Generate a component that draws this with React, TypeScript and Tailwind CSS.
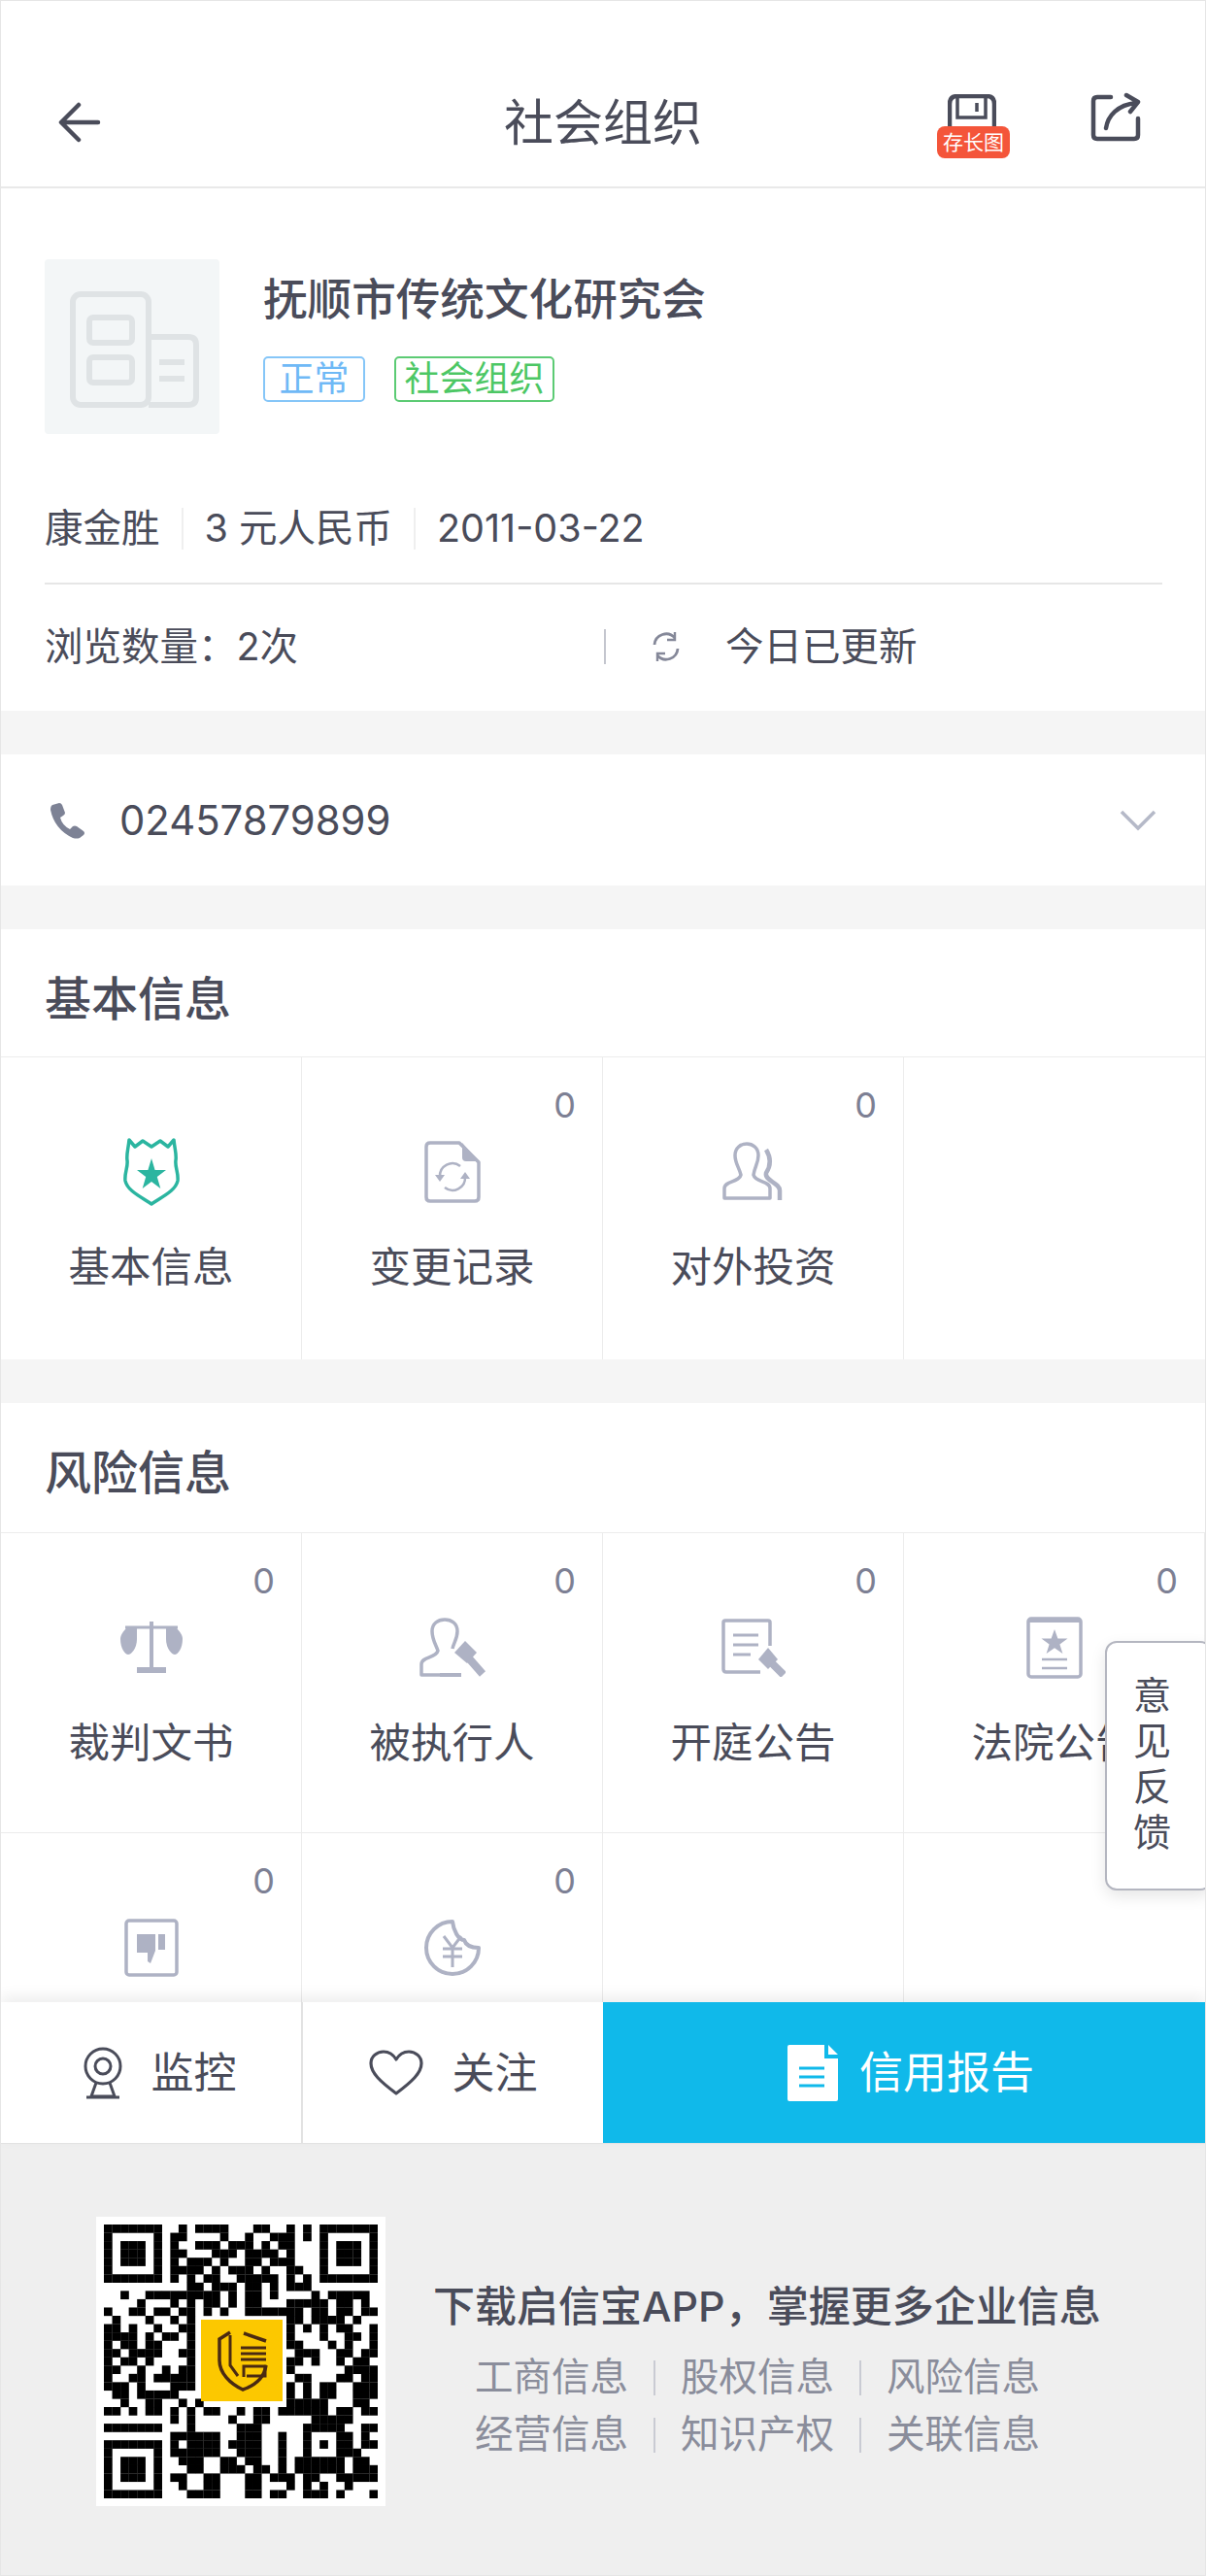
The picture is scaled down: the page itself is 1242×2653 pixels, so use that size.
import React from "react";

const F0 = "11111110";
const F1 = "10000010";
const F2 = "10111010";
const R0 = "01111111";
const R1 = "01000001";
const R2 = "01011101";
const Z = "0000000000";
const N = "00000000";

const QR = [
  F0 + "01011110001100101" + R0,
  F1 + "11000010010011101" + R1,
  F2 + "10011101110101100" + R2,
  F2 + "11000111011110100" + R2,
  F2 + "10111010011011100" + R2,
  F1 + "11110101110100110" + R1,
  F0 + "10101100111110101" + R0,
  N + "00110111011010111" + N,
  "00100111" + "11111101011010000" + "10111110",
  "00001000" + "10101101011000111" + "11011010",
  "10011011" + "01101010011111110" + "11011011",
  "01000100" + "1010" + Z + "110" + "11110100",
  "11010010" + "0110" + Z + "101" + "01011001",
  "11110101" + "1010" + Z + "100" + "01001101",
  "10110110" + "0010" + Z + "110" + "00101001",
  "11011110" + "0110" + Z + "011" + "10011011",
  "10110100" + "0010" + Z + "110" + "10010110",
  "11001001" + "0110" + Z + "100" + "00001111",
  "10011011" + "1110" + Z + "011" + "00011011",
  "11101000" + "1110" + Z + "101" + "01100111",
  "01101111" + "1000" + Z + "101" + "01100111",
  "00100110" + "0101" + Z + "111" + "11000110",
  "11010110" + "10101100101101111" + "11011011",
  N + "10100001001100000" + "11111000",
  "11111110" + "00100000111000001" + "11110011",
  N + "11111100111001001" + "00011010",
  F0 + "10111101111001001" + "01011011",
  F1 + "11111100111001001" + "00011100",
  F2 + "01110011011001011" + "11110110",
  F2 + "00110011101101011" + "11110111",
  F2 + "11001100011011101" + "10011111",
  F1 + "01001100011000101" + "01001000",
  F0 + "00111100011011001" + "11010001",
];

const dark = "#4a4c5a";
const ic = "#aeb2c4";

function QRCode() {
  return (
    <div className="relative w-[298px] h-[298px] bg-white flex items-center justify-center shrink-0">
      <svg width="282" height="282" viewBox="0 0 33 33" className="block">
        {QR.map((row, y) =>
          row.split("").map((c, x) => (c === "1" ? <rect key={x + "-" + y} x={x} y={y} width="1.02" height="1.02" fill="#000" /> : null))
        )}
      </svg>
      <svg width="84" height="84" viewBox="0 0 84 84" className="absolute left-[108px] top-[106px]">
        <rect x="0" y="0" width="84" height="84" fill="#fcc800" />
        <g fill="none" stroke="#4a2a12" strokeWidth="3">
          <path d="M30 13 L19 20 V42 C19 55 30 66 43 72 C55 68 65 60 67 47" strokeWidth="3.5" />
          <path d="M30 16 V47 L38 58" />
          <path d="M44 14 L67 22" strokeWidth="3.5" />
          <path d="M41 29 H67 M41 35 H67 M41 41 H67" />
          <path d="M44 59 V48 H66 V58 H47" />
        </g>
      </svg>
    </div>
  );
}

const Shield = () => (
  <svg width="60" height="70" viewBox="0 0 60 70">
    <path d="M7 2 L13 9 L21 3 L30 9 L39 3 L47 9 L53 2 C54 12 56 17 55 23 C54 30 58 36 57 44 C55 54 42 60 30 68 C18 60 5 54 3 44 C2 36 6 30 5 23 C4 17 6 12 7 2 Z" fill="none" stroke="#2bb5a0" strokeWidth="3.5" strokeLinejoin="round" />
    <path d="M30 21 L33.6 33 H45 L35.8 40 L39.3 52 L30 45 L20.7 52 L24.2 40 L15 33 H26.4 Z" fill="#2bb5a0" />
  </svg>
);
const DocRefresh = () => (
  <svg width="60" height="66" viewBox="0 0 60 66" fill="none" stroke={ic} strokeWidth="3.5">
    <path d="M37 3 H7 Q3 3 3 7 V59 Q3 63 7 63 H53 Q57 63 57 59 V23 Z" strokeLinejoin="round" />
    <path d="M40 3 L57 22 H44 Q40 22 40 18 Z" fill={ic} stroke="none" />
    <path d="M17 38 A13 13 0 0 1 38 27" strokeWidth="2.5" />
    <path d="M43 38 A13 13 0 0 1 22 49" strokeWidth="2.5" />
    <path d="M12 36 L22 36 L17 43 Z M38 40 L48 40 L43 33 Z" fill={ic} stroke="none" />
  </svg>
);
const People = () => (
  <svg width="66" height="62" viewBox="0 0 66 62" fill="none" stroke={ic} strokeWidth="3.5">
    <path d="M3 58 V48 C3 40 18 42 20 34 C18 26 14 22 14 14 C14 6 20 2 26 2 C32 2 38 6 38 14 C38 22 34 26 33 34 C35 42 50 40 50 48 V58 Z" strokeLinejoin="round" />
    <path d="M46 8 C52 18 50 26 46 32 C44 40 60 42 60 50 V60" strokeWidth="4.5" />
  </svg>
);
const Scale = () => (
  <svg width="66" height="54" viewBox="0 0 66 54">
    <path d="M33 0 V48" stroke={ic} strokeWidth="4" />
    <path d="M18 50 H48" stroke={ic} strokeWidth="6" />
    <path d="M6 6 H60" stroke={ic} strokeWidth="3" />
    <path d="M1 18 C1 14 4 10 7 7 L18 7 V18 C18 28 12 34 9 34 C6 34 1 28 1 18 Z" fill={ic} />
    <path d="M48 7 L59 7 C62 10 65 14 65 18 C65 28 60 34 57 34 C54 34 48 28 48 18 Z" fill={ic} />
  </svg>
);
const PersonGavel = () => (
  <svg width="70" height="62" viewBox="0 0 70 62" fill="none" stroke={ic} strokeWidth="3.5">
    <path d="M36 59 H3 V48 C3 40 18 42 20 34 C17 26 14 22 14 14 C14 6 20 2 27 2 C34 2 40 6 40 14 C40 22 36 26 35 32" strokeLinejoin="round" />
    <path d="M48 24 L60 36 L50 47 L37 36 Z" fill={ic} stroke="none" />
    <path d="M52 42 L66 58" strokeWidth="8" />
    <path d="M22 59 H44" strokeWidth="4" />
  </svg>
);
const DocGavel = () => (
  <svg width="66" height="60" viewBox="0 0 66 60" fill="none" stroke={ic} strokeWidth="3.5">
    <path d="M50 28 V4 Q50 2 48 2 H4 Q2 2 2 4 V52 Q2 55 5 55 H40" />
    <path d="M12 17 H38 M12 27 H38 M12 37 H30" strokeWidth="3" />
    <path d="M48 30 L58 42 L48 52 L38 42 Z" fill={ic} stroke="none" />
    <path d="M52 46 L64 58" strokeWidth="8" />
  </svg>
);
const Cert = () => (
  <svg width="58" height="64" viewBox="0 0 58 64" fill="none" stroke={ic} strokeWidth="3.5">
    <rect x="2" y="2" width="54" height="60" rx="3" />
    <path d="M2 4 H56" strokeWidth="4" />
    <path d="M29 13 L32.4 22.5 H42.5 L34.4 28.5 L37.4 38 L29 32.2 L20.6 38 L23.6 28.5 L15.5 22.5 H25.6 Z" fill={ic} stroke="none" />
    <path d="M16 44 H42 M16 53 H42" strokeWidth="2.5" />
  </svg>
);
const ThumbDown = () => (
  <svg width="56" height="60" viewBox="0 0 56 60" fill="none" stroke={ic} strokeWidth="3.5">
    <rect x="2" y="2" width="52" height="56" rx="3" />
    <path d="M13 16 H32 V33 L27 46 L24 44 V35 H13 Z" fill={ic} stroke="none" />
    <path d="M35 16 H42 V32 H35 Z" fill={ic} stroke="none" />
  </svg>
);
const Coin = () => (
  <svg width="60" height="60" viewBox="0 0 60 60" fill="none" stroke={ic} strokeWidth="4">
    <path d="M30 3 A27 27 0 1 0 57 30 C50 30 44 28 42 22 C36 22 31 12 30 3 Z" strokeLinejoin="round" />
    <path d="M21 18 L30 30 L39 18 M20 31 H40 M20 39 H40 M30 30 V50" strokeWidth="3" />
  </svg>
);

type Item = { t?: string; icon: React.ReactNode; n?: boolean };

function Cell({ t, icon, n = true }: Item) {
  return (
    <div className="relative h-full border-r border-[#ececec] flex flex-col items-center pt-[83px]">
      {n && <span className="absolute right-[27px] top-[24px] text-[36px] leading-[50px] text-[#7d8094]">0</span>}
      <div className="h-[70px] flex items-center justify-center">{icon}</div>
      {t && <div className="mt-[35px] text-[42.5px] leading-[56px] whitespace-nowrap" style={{ color: dark }}>{t}</div>}
    </div>
  );
}

const Sep = () => <span className="w-[2px] h-[36px] bg-[#c9cbd3] mx-[26px]" />;

export default function App() {
  return (
    <div
      className="relative w-[1242px] h-[2653px] overflow-hidden bg-[#f5f5f5] border border-[#e6e6e6] box-border flex flex-col text-[#4a4c5a]"
      style={{ fontFamily: 'Inter, "Noto Sans CJK SC", sans-serif' }}
    >
      {/* header */}
      <header className="h-[107px] shrink-0 bg-white border-b-2 border-[#e9e9e9] grid grid-cols-[1fr_auto_1fr] pt-[84px] box-content">
        <div className="pl-[59px] pt-[20px]">
          <svg width="44" height="42" viewBox="0 0 44 42" fill="none" stroke={dark} strokeWidth="4.5" strokeLinecap="round" strokeLinejoin="round">
            <path d="M21 3 L3 21 L21 39 M4 21 H41" />
          </svg>
        </div>
        <div className="text-[51px] leading-[84px]">社会组织</div>
        <div className="flex justify-end items-start pr-[66px]">
          <div className="relative w-[75px] h-[78px] mr-[83px] mt-[12px]">
            <svg width="50" height="40" viewBox="0 0 50 40" fill="none" stroke={dark} strokeWidth="4.5" className="absolute left-[11px] top-0">
              <path d="M2 40 V10 Q2 2 10 2 H40 Q48 2 48 10 V40" />
              <path d="M10 2 V24 H39 V2 M30 9 V18" strokeWidth="3.5" />
            </svg>
            <span className="absolute left-0 top-[33px] w-[75px] h-[33px] rounded-[8px] bg-[#f4553a] text-white text-[21px] leading-[33px] text-center">存长图</span>
          </div>
          <svg width="52" height="52" viewBox="0 0 52 52" fill="none" stroke={dark} strokeWidth="4.5" strokeLinecap="round" strokeLinejoin="round" className="mt-[10px]">
            <path d="M21 5 H7 Q3 5 3 9 V44 Q3 48 7 48 H45 Q49 48 49 44 V27" />
            <path d="M16 37 C18 24 28 13 47 11 M37 3 L49 10 L41 20" />
          </svg>
        </div>
      </header>

      {/* company card */}
      <section className="h-[538px] shrink-0 bg-white pt-[73px] mb-[45px] px-[45px] box-border">
        <div className="flex h-[180px]">
          <div className="w-[180px] h-[180px] rounded-[4px] bg-[#f3f6f7] shrink-0">
            <svg width="180" height="180" viewBox="0 0 180 180" fill="none" stroke="#dfe3e5" strokeWidth="6">
              <rect x="29" y="36" width="78" height="114" rx="8" />
              <path d="M107 80 H148 Q156 80 156 88 V142 Q156 150 148 150 H107" />
              <rect x="46" y="60" width="44" height="26" rx="4" />
              <rect x="46" y="101" width="44" height="26" rx="4" />
              <path d="M118 106 H144 M118 123 H144" />
            </svg>
          </div>
          <div className="ml-[45px] pt-[12px]">
            <div className="text-[45.6px] leading-[60px] font-medium whitespace-nowrap">抚顺市传统文化研究会</div>
            <div className="flex gap-[30px] mt-[28px]">
              <span className="w-[105px] h-[47px] rounded-[5px] border-2 border-[#86c6f8] text-[#6fb9f6] text-[36px] leading-[42px] text-center">正常</span>
              <span className="w-[165px] h-[47px] rounded-[5px] border-2 border-[#5ccb74] text-[#4cc764] text-[36px] leading-[42px] text-center">社会组织</span>
            </div>
          </div>
        </div>
        <div className="flex items-center h-[44px] mt-[75px] text-[39.5px] leading-[44px]">
          <span>康金胜</span>
          <span className="w-[2px] h-[43px] bg-[#efefef] mx-[22px]" />
          <span>3 元人民币</span>
          <span className="w-[2px] h-[43px] bg-[#efefef] mx-[22px]" />
          <span>2011-03-22</span>
        </div>
        <div className="h-[2px] bg-[#e6e6e6] mt-[34px] -mr-[1px]" />
        <div className="flex items-center h-[44px] mt-[42px] text-[39.5px] leading-[44px]">
          <span className="w-[576px]">浏览数量：2次</span>
          <span className="w-[2px] h-[36px] bg-[#c4c6ce]" />
          <svg width="32" height="32" viewBox="0 0 32 32" fill="none" stroke="#858899" strokeWidth="2.8" className="ml-[46px]">
            <path d="M4 14 A12 12 0 0 1 25 7 M28 18 A12 12 0 0 1 7 25" />
            <path d="M25 1 V9 H17 M7 31 V23 H15" strokeWidth="2.4" />
          </svg>
          <span className="ml-[45px]">今日已更新</span>
        </div>
      </section>

      {/* phone */}
      <section className="h-[135px] shrink-0 bg-white mb-[45px] flex items-center px-[50px]">
        <svg width="38" height="38" viewBox="0 0 38 38" fill="#7d8295">
          <path d="M3 3 L10 1 Q12 1 13 3 L16 11 Q16 13 14 14 L11 16 Q13 24 21 28 L24 25 Q26 24 28 25 L35 30 Q37 32 35 34 L31 37 Q28 38 24 37 Q5 28 1 8 Q1 4 3 3 Z" />
        </svg>
        <span className="ml-[34px] text-[41.8px] leading-[56px] flex-1">02457879899</span>
        <svg width="38" height="22" viewBox="0 0 38 22" fill="none" stroke="#b5b9c8" strokeWidth="3.5">
          <path d="M2 2 L19 19 L36 2" />
        </svg>
      </section>

      {/* basic */}
      <section className="shrink-0 bg-white mb-[45px]">
        <h2 className="h-[132px] pl-[45px] pt-[44px] text-[48px] leading-[56px] font-medium border-b border-[#ececec] box-border">基本信息</h2>
        <div className="grid grid-cols-4 h-[311px]">
          <Cell t="基本信息" icon={<Shield />} n={false} />
          <Cell t="变更记录" icon={<DocRefresh />} />
          <Cell t="对外投资" icon={<People />} />
          <div />
        </div>
      </section>

      {/* risk */}
      <section className="flex-1 bg-white min-h-0 overflow-hidden">
        <h2 className="h-[134px] pl-[45px] pt-[44px] text-[48px] leading-[56px] font-medium border-b border-[#ececec] box-border">风险信息</h2>
        <div className="grid grid-cols-4 h-[309px] border-b border-[#ececec] box-border">
          <Cell t="裁判文书" icon={<Scale />} />
          <Cell t="被执行人" icon={<PersonGavel />} />
          <Cell t="开庭公告" icon={<DocGavel />} />
          <Cell t="法院公告" icon={<Cert />} />
        </div>
        <div className="grid grid-cols-4 h-[309px]">
          <Cell icon={<ThumbDown />} />
          <Cell icon={<Coin />} />
          <div className="border-r border-[#ececec]" />
          <div />
        </div>
      </section>

      {/* bottom bar */}
      <div className="relative shrink-0 h-[146px] bg-white flex border-b border-[#e2e2e2] box-border shadow-[0_-6px_14px_rgba(0,0,0,0.07)]">
        <div className="w-[311px] border-r-2 border-[#e2e2e2] flex items-center justify-center gap-[28px] pl-[16px]">
          <svg width="44" height="54" viewBox="0 0 44 54" fill="none" stroke={dark} strokeWidth="3">
            <circle cx="22" cy="20" r="18" />
            <circle cx="22" cy="20" r="8" />
            <path d="M15 37 L10 51 H34 L29 37 M5 52 H39" />
          </svg>
          <span className="text-[44px] leading-[56px]">监控</span>
        </div>
        <div className="w-[309px] flex items-center justify-center gap-[30px]">
          <svg width="56" height="48" viewBox="0 0 56 48" fill="none" stroke={dark} strokeWidth="3.2" strokeLinejoin="round">
            <path d="M28 45 C12 33 2 24 2 14 C2 7 8 2 15 2 C20 2 25 5 28 10 C31 5 36 2 41 2 C48 2 54 7 54 14 C54 24 44 33 28 45 Z" />
          </svg>
          <span className="text-[44px] leading-[56px]">关注</span>
        </div>
        <div className="flex-1 bg-[#10b9ea] flex items-center justify-center gap-[22px] pl-[14px] text-white">
          <svg width="52" height="58" viewBox="0 0 52 58">
            <path d="M2 0 H38 V14 H52 V56 Q52 58 50 58 H2 Q0 58 0 56 V2 Q0 0 2 0 Z M42 0 L52 10 H42 Z" fill="#fff" />
            <path d="M12 24 H38 M12 33 H38 M12 42 H38" stroke="#10b9ea" strokeWidth="3" />
          </svg>
          <span className="text-[45px] leading-[56px]">信用报告</span>
        </div>
      </div>

      {/* footer */}
      <footer className="h-[444px] shrink-0 bg-[#efefef] flex pl-[98px] pt-[75px]">
        <QRCode />
        <div className="ml-[49px] pt-[62px]">
          <div className="text-[43px] leading-[60px] font-medium whitespace-nowrap">下载启信宝APP，掌握更多企业信息</div>
          <div className="pl-[43px] mt-[14px] text-[39.5px] leading-[59px] text-[#8a8d9b]">
            <div className="flex items-center">
              <span>工商信息</span><Sep /><span>股权信息</span><Sep /><span>风险信息</span>
            </div>
            <div className="flex items-center">
              <span>经营信息</span><Sep /><span>知识产权</span><Sep /><span>关联信息</span>
            </div>
          </div>
        </div>
      </footer>

      {/* feedback */}
      <div className="absolute left-[1137px] top-[1689px] w-[110px] h-[257px] bg-white border-2 border-[#b4b6c0] rounded-[12px] shadow-[0_6px_16px_rgba(0,0,0,0.10)] pl-[27px] pt-[30px] text-[39px] leading-[47px] box-border">
        <div>意</div>
        <div>见</div>
        <div>反</div>
        <div>馈</div>
      </div>
    </div>
  );
}
